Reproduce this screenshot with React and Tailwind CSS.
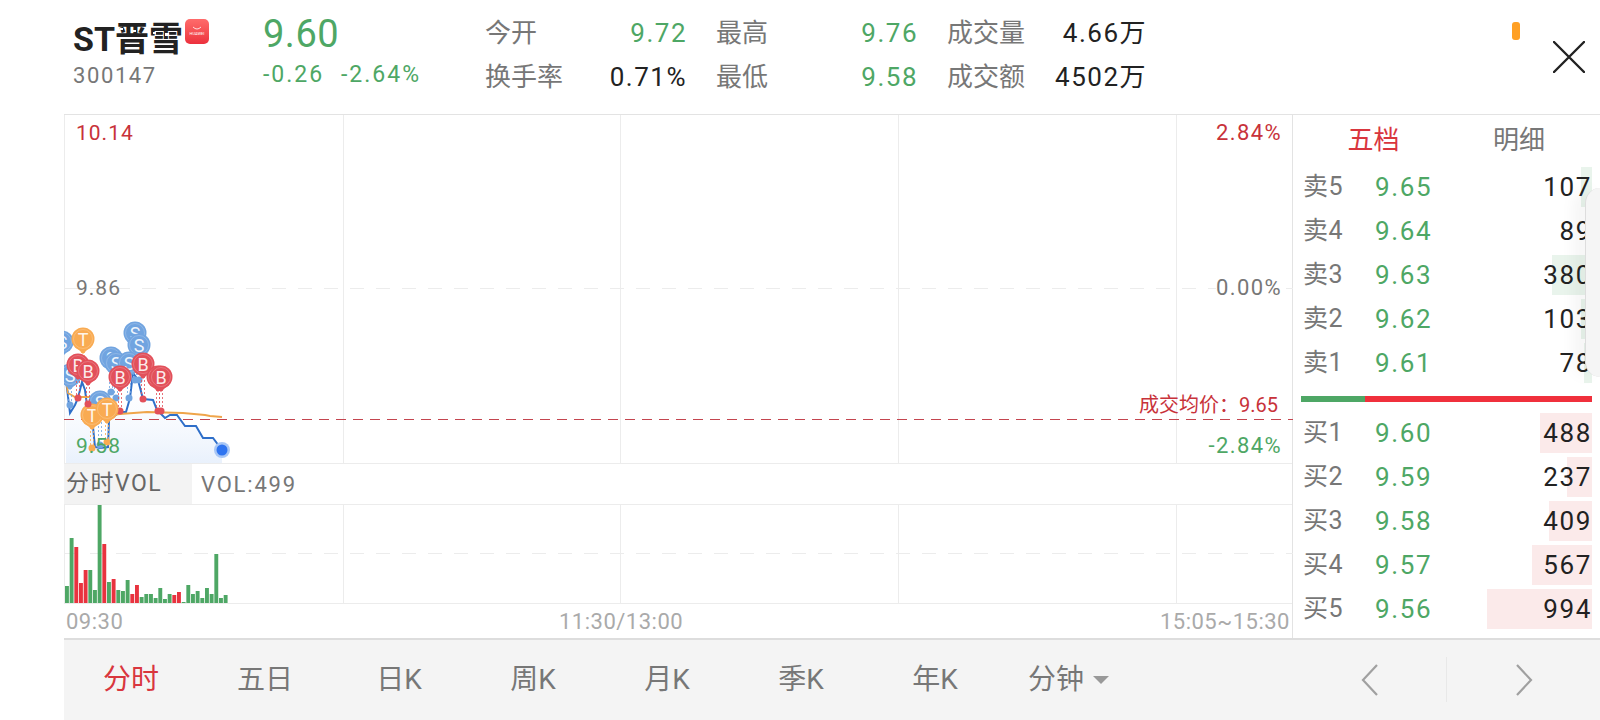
import React from 'react';

const GREEN = '#4ea765';

const sells = [
  { label: '卖5', price: '9.65', vol: '107', bar: 11 },
  { label: '卖4', price: '9.64', vol: '89', bar: 0 },
  { label: '卖3', price: '9.63', vol: '380', bar: 40 },
  { label: '卖2', price: '9.62', vol: '103', bar: 11 },
  { label: '卖1', price: '9.61', vol: '78', bar: 8 },
];

const buys = [
  { label: '买1', price: '9.60', vol: '488', bar: 52 },
  { label: '买2', price: '9.59', vol: '237', bar: 25 },
  { label: '买3', price: '9.58', vol: '409', bar: 43 },
  { label: '买4', price: '9.57', vol: '567', bar: 60 },
  { label: '买5', price: '9.56', vol: '994', bar: 105 },
];

const tabs = ['分时', '五日', '日K', '周K', '月K', '季K', '年K'];

// [height, isRed]
const volumes = [
  [17, 0], [65, 0], [56, 1], [20, 1], [33, 1], [33, 0], [13, 0], [98, 0], [59, 1], [21, 0], [24, 1], [13, 0],
  [12, 0], [23, 0], [9, 1], [18, 1], [6, 0], [9, 0], [9, 0], [5, 0], [15, 0], [4, 0], [9, 0], [8, 1], [11, 1],
  [1, 0], [18, 0], [9, 0], [12, 0], [5, 0], [15, 0], [9, 0], [49, 0], [5, 0], [8, 0],
];

const priceLine = '66,380 70,413 75,405 78,398 82,382 85,390 87,405 93,427 95,447 100,448 108,447 109,420 120,412 126,412 130,398 133,373 138,380 143,399 153,400 157,410 165,418 170,415 177,415 185,426 196,426 203,438 213,438 222,450';
const avgLine = '66,380 68,393 75,397 90,397 96,408 104,416 120,414 147,412 183,413 205,415 210,416 222,417';

// x, y of the pin head, then y of the dot it points at
const pins = [
  { t: 'S', x: 62, y: 342, to: 380 },
  { t: 'S', x: 70, y: 375, to: 405 },
  { t: 'T', x: 83, y: 339, to: 372 },
  { t: 'S', x: 100, y: 402, to: 445 },
  { t: 'T', x: 92, y: 415, to: 448 },
  { t: 'S', x: 111, y: 358, to: 392 },
  { t: 'S', x: 116, y: 363, to: 398 },
  { t: 'S', x: 135, y: 333, to: 380 },
  { t: 'S', x: 139, y: 345, to: 380 },
  { t: 'S', x: 129, y: 363, to: 398 },
  { t: 'B', x: 78, y: 365, to: 398 },
  { t: 'B', x: 88, y: 371, to: 404 },
  { t: 'B', x: 120, y: 377, to: 411 },
  { t: 'T', x: 107, y: 409, to: 442 },
  { t: 'B', x: 143, y: 364, to: 399 },
  { t: 'B', x: 158, y: 377, to: 411 },
  { t: 'B', x: 161, y: 377, to: 411 },
];

const pinColors = { B: '#e2505a', S: '#71a4e0', T: '#f9ab52' };

function Pin({ t, x, y, to }) {
  const color = pinColors[t];
  return (
    <g>
      <line x1={x - 1.5} x2={x - 1.5} y1={y + 12} y2={to} stroke={color} strokeOpacity="0.8" strokeWidth="1" strokeDasharray="2 2" />
      <line x1={x + 1.5} x2={x + 1.5} y1={y + 12} y2={to} stroke={color} strokeOpacity="0.8" strokeWidth="1" strokeDasharray="2 2" />
      <circle cx={x} cy={to} r="3.5" fill={color} />
      <path d={`M${x - 10} ${y + 5} L${x} ${y + 15} L${x + 10} ${y + 5} Z`} fill={color} />
      <circle cx={x} cy={y} r="11.5" fill={color} />
      <circle cx={x} cy={y} r="9.5" fill="none" stroke="#ffffff" strokeOpacity="0.25" strokeWidth="0.8" />
      <text x={x} y={y + 6.5} textAnchor="middle" fontSize="18" fontFamily="Roboto, sans-serif" fill="#ffffff" fillOpacity="0.9">{t}</text>
    </g>
  );
}

function PriceChart() {
  return (
    <svg className="absolute inset-0" width="1229" height="349" viewBox="64 115 1229 349">
      <defs>
        <linearGradient id="area" x1="0" y1="0" x2="0" y2="1">
          <stop offset="0" stopColor="#ffffff" stopOpacity="0.2" />
          <stop offset="1" stopColor="#e9f1fc" />
        </linearGradient>
      </defs>
      {[64.5, 343.5, 620.5, 898.5, 1176.5].map((x) => (
        <line key={x} x1={x} x2={x} y1="115" y2="464" stroke="#ececec" />
      ))}
      <line x1="64" x2="1293" y1="288.5" y2="288.5" stroke="#ececec" strokeDasharray="14 12" />
      <polygon points={`66,463 ${priceLine} 222,463`} fill="url(#area)" />
      <polyline points={priceLine} fill="none" stroke="#2f6fc9" strokeWidth="2" />
      <polyline points={avgLine} fill="none" stroke="#efa54a" strokeWidth="1.8" />
      <line x1="64" x2="1293" y1="419.5" y2="419.5" stroke="#c4454f" strokeDasharray="10 7" />
      {pins.map((p, i) => <Pin key={i} {...p} />)}
      <circle cx="222" cy="450" r="8" fill="#a9c7f5" />
      <circle cx="222" cy="450" r="5.5" fill="#2f74f0" />
    </svg>
  );
}

function VolumeChart() {
  return (
    <svg className="absolute inset-0" width="1229" height="99" viewBox="64 505 1229 99">
      {[64.5, 343.5, 620.5, 898.5, 1176.5].map((x) => (
        <line key={x} x1={x} x2={x} y1="505" y2="604" stroke="#ececec" />
      ))}
      <line x1="64" x2="1293" y1="553.5" y2="553.5" stroke="#ececec" strokeDasharray="14 12" />
      {volumes.map(([h, isRed], i) => (
        <rect key={i} x={65 + i * 4.667} y={603 - h} width="3.9" height={h} fill={isRed ? '#e8333f' : GREEN} />
      ))}
    </svg>
  );
}

function Stat({ label, value, valueClass }) {
  return (
    <div className="flex items-center justify-between h-[44px]">
      <span className="text-[26px] text-[#777777]">{label}</span>
      <span className={`text-[26px] tracking-[1.5px] ${valueClass}`}>{value}</span>
    </div>
  );
}

function DepthRow({ row, barClass }) {
  return (
    <div className="relative flex items-center h-[44px] pl-[10px]">
      {row.bar > 0 && (
        <div className={`absolute inset-y-[2px] right-0 ${barClass}`} style={{ width: row.bar }} />
      )}
      <span className="relative w-[72px] text-[25px] text-[#777777] tracking-[0.5px]">{row.label}</span>
      <span className="relative text-[26px] tracking-[1.6px] text-[#4ea765]">{row.price}</span>
      <span className="relative ml-auto text-[26px] tracking-[1.6px] text-[#222222]">{row.vol}</span>
    </div>
  );
}

export default function App() {
  return (
    <div className="w-[1600px] h-[720px] pl-16 flex flex-col bg-white overflow-hidden font-['Roboto','Noto_Sans_CJK_SC',sans-serif]">
      {/* Header */}
      <div className="h-[115px] shrink-0 flex border-b border-[#e3e3e3] relative">
        <div className="w-[199px] pl-[9px] pt-[17px] shrink-0">
          <div className="flex items-start h-[42px]">
            <span className="relative text-[34px] leading-[44px] font-bold text-[#222222] whitespace-nowrap">
              ST晋雪
              {/* specks over the name, the source image is patchy here */}
              <span className="absolute left-[47px] top-[11px] w-[3px] h-[2px] bg-white" />
              <span className="absolute left-[60px] top-[13px] w-[3px] h-[2px] bg-white" />
              <span className="absolute left-[80px] top-[15px] w-[3px] h-[2px] bg-white" />
              <span className="absolute left-[92px] top-[16px] w-[4px] h-[3px] bg-white" />
            </span>
            <div className="ml-[2px] mt-[2px] w-[24px] h-[25px] shrink-0 rounded-[5px] bg-gradient-to-b from-[#ff6b6b] to-[#ec2f3d] flex flex-col items-center justify-center">
              <svg width="10" height="5" viewBox="0 0 10 5"><path d="M1 1 Q5 5 9 1" fill="none" stroke="#ffffff" strokeWidth="0.8" /></svg>
              <span className="text-[4px] leading-[6px] text-white">HUAWEI</span>
            </div>
          </div>
          <div className="mt-[2px] text-[22px] leading-[30px] tracking-[1.6px] text-[#777777]">300147</div>
        </div>
        <div className="w-[222px] shrink-0 pt-[10px]">
          <div className="text-[38px] leading-[48px] tracking-[0.5px] text-[#4ea765]">9.60</div>
          <div className="flex mt-[2px] text-[23px] leading-[30px] tracking-[2px] text-[#4ea765]">
            <span className="w-[78px]">-0.26</span>
            <span>-2.64%</span>
          </div>
        </div>
        <div className="grid grid-cols-[202px_202px_200px] gap-x-[29px] pt-[11px] h-fit">
          <Stat label="今开" value="9.72" valueClass="text-[#4ea765]" />
          <Stat label="最高" value="9.76" valueClass="text-[#4ea765]" />
          <Stat label="成交量" value="4.66万" valueClass="text-[#222222]" />
          <Stat label="换手率" value="0.71%" valueClass="text-[#222222]" />
          <Stat label="最低" value="9.58" valueClass="text-[#4ea765]" />
          <Stat label="成交额" value="4502万" valueClass="text-[#222222]" />
        </div>
        <div className="absolute left-[1448px] top-[22px] w-[8px] h-[18px] rounded-[3px] bg-[#ffa024]" />
        <svg className="absolute left-[1489px] top-[41px]" width="32" height="32" viewBox="0 0 32 32">
          <path d="M1 1 L31 31 M31 1 L1 31" stroke="#222222" strokeWidth="2.4" strokeLinecap="round" />
        </svg>
      </div>

      {/* Chart + depth */}
      <div className="flex h-[523px] shrink-0">
        <div className="w-[1229px] shrink-0 flex flex-col border-r border-[#e3e3e3]">
          <div className="relative h-[349px] shrink-0 border-b border-[#ececec]">
            <PriceChart />
            <span className="absolute left-[12px] top-[4px] text-[21px] leading-[28px] tracking-[1px] text-[#c8323a]">10.14</span>
            <span className="absolute left-[12px] top-[159px] text-[21px] leading-[28px] tracking-[1px] text-[#777777]">9.86</span>
            <span className="absolute left-[12px] top-[317px] text-[21px] leading-[28px] tracking-[1px] text-[#4ea765]">9.58</span>
            <span className="absolute right-[10px] top-[4px] text-[22px] leading-[28px] tracking-[1.4px] text-[#c8323a]">2.84%</span>
            <span className="absolute right-[10px] top-[159px] text-[22px] leading-[28px] tracking-[1.4px] text-[#777777] bg-white">0.00%</span>
            <span className="absolute right-[10px] top-[317px] text-[22px] leading-[28px] tracking-[1.4px] text-[#4ea765]">-2.84%</span>
            <span className="absolute right-[14px] top-[278px] text-[20px] leading-[24px] text-[#c8323a]">成交均价：9.65</span>
          </div>
          <div className="flex items-center h-[41px] shrink-0 border-b border-[#ececec]">
            <div className="w-[128px] h-full flex items-center pl-[2px] bg-[#f3f3f3] text-[23px] tracking-[1.5px] text-[#666666]">分时VOL</div>
            <span className="ml-[9px] text-[22px] tracking-[1.8px] text-[#777777]">VOL:499</span>
          </div>
          <div className="relative h-[99px] shrink-0 border-b border-[#ececec]">
            <VolumeChart />
          </div>
          <div className="flex-1 flex items-center px-[2px] text-[22px] tracking-[0.5px] text-[#aaaaaa]">
            <span className="w-[493px]">09:30</span>
            <span>11:30/13:00</span>
            <span className="ml-auto">15:05~15:30</span>
          </div>
        </div>

        <div className="relative flex-1 overflow-hidden">
          <div className="flex h-[50px] text-[26px]">
            <div className="w-[161px] flex items-center justify-center text-[#d9363e]">五档</div>
            <div className="w-[130px] flex items-center justify-center text-[#777777]">明细</div>
          </div>
          <div className="pr-[8px]">
            {sells.map((r) => <DepthRow key={r.label} row={r} barClass="bg-[#e9f4ec]" />)}
            <div className="flex h-[6px] mt-[11px] mb-[9px] ml-[8px]">
              <div className="w-[64px] bg-[#4ea765]" />
              <div className="flex-1 bg-[#f0303c]" />
            </div>
            {buys.map((r) => <DepthRow key={r.label} row={r} barClass="bg-[#fbeaea]" />)}
          </div>
          <div className="absolute right-0 top-[73px] w-[15px] h-[189px] rounded-l-[20px] bg-[#f5f5f5] border-l border-[#dddddd] shadow-[-10px_0_16px_rgba(0,0,0,0.05)]" />
        </div>
      </div>

      {/* Bottom tabs */}
      <div className="flex-1 flex items-center bg-[#f4f4f4] border-t-[2px] border-[#dddddd] pb-[1px]">
        {tabs.map((t, i) => (
          <div key={t} className={`w-[134px] shrink-0 text-center text-[28px] ${i === 0 ? 'text-[#d9363e]' : 'text-[#777777]'}`}>{t}</div>
        ))}
        <div className="flex items-center ml-[26px] text-[28px] text-[#777777]">
          <span>分钟</span>
          <span className="ml-[9px] w-0 h-0 border-x-[8px] border-x-transparent border-t-[8px] border-t-[#999999]" />
        </div>
        <svg className="ml-[252px]" width="18" height="32" viewBox="0 0 18 32"><path d="M16 1 L2 16 L16 31" fill="none" stroke="#a0a0a0" strokeWidth="2.2" /></svg>
        <div className="ml-[67px] w-[1px] h-[45px] bg-[#e8e8e8]" />
        <svg className="ml-[68px]" width="18" height="32" viewBox="0 0 18 32"><path d="M2 1 L16 16 L2 31" fill="none" stroke="#a0a0a0" strokeWidth="2.2" /></svg>
      </div>
    </div>
  );
}
